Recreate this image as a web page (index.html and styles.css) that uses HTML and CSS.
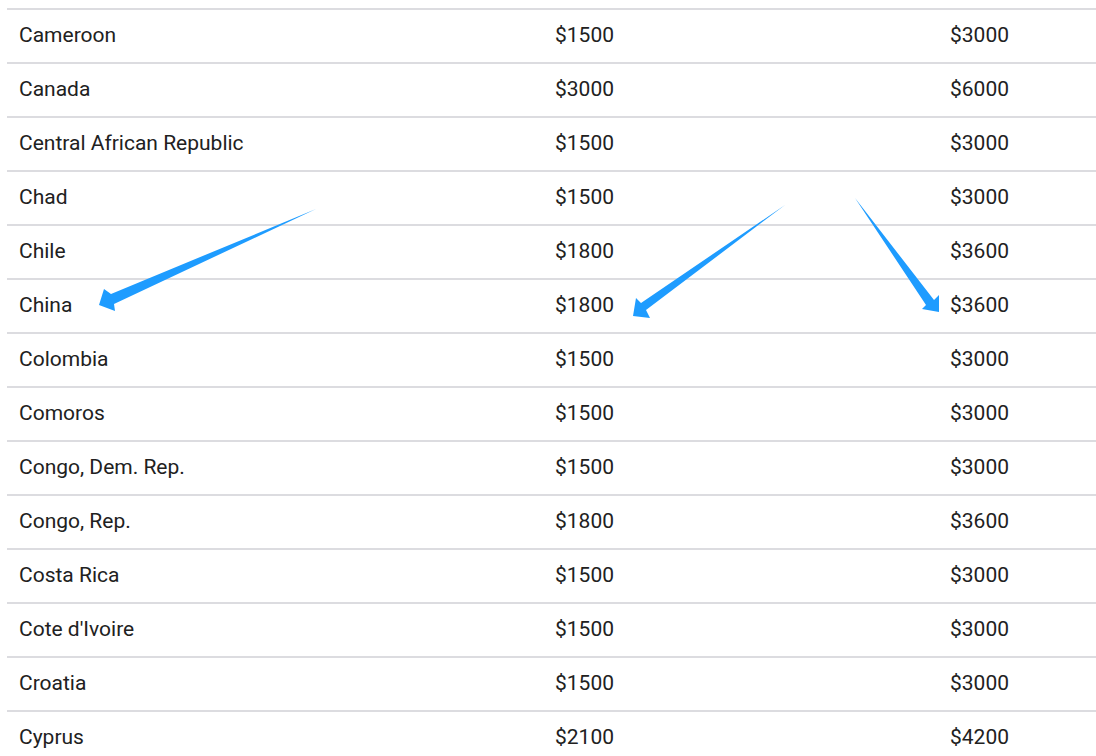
FILE: index.html
```html
<!DOCTYPE html>
<html>
<head>
<meta charset="utf-8">
<link rel="stylesheet" href="styles.css">
</head>
<body>
<div class="page">
  <div class="table">
    <div class="row"><div class="cell c1">Cameroon</div><div class="cell c2">$1500</div><div class="cell c3">$3000</div></div>
    <div class="row"><div class="cell c1">Canada</div><div class="cell c2">$3000</div><div class="cell c3">$6000</div></div>
    <div class="row"><div class="cell c1">Central African Republic</div><div class="cell c2">$1500</div><div class="cell c3">$3000</div></div>
    <div class="row"><div class="cell c1">Chad</div><div class="cell c2">$1500</div><div class="cell c3">$3000</div></div>
    <div class="row"><div class="cell c1">Chile</div><div class="cell c2">$1800</div><div class="cell c3">$3600</div></div>
    <div class="row"><div class="cell c1">China</div><div class="cell c2">$1800</div><div class="cell c3">$3600</div></div>
    <div class="row"><div class="cell c1">Colombia</div><div class="cell c2">$1500</div><div class="cell c3">$3000</div></div>
    <div class="row"><div class="cell c1">Comoros</div><div class="cell c2">$1500</div><div class="cell c3">$3000</div></div>
    <div class="row"><div class="cell c1">Congo, Dem. Rep.</div><div class="cell c2">$1500</div><div class="cell c3">$3000</div></div>
    <div class="row"><div class="cell c1">Congo, Rep.</div><div class="cell c2">$1800</div><div class="cell c3">$3600</div></div>
    <div class="row"><div class="cell c1">Costa Rica</div><div class="cell c2">$1500</div><div class="cell c3">$3000</div></div>
    <div class="row"><div class="cell c1">Cote d'Ivoire</div><div class="cell c2">$1500</div><div class="cell c3">$3000</div></div>
    <div class="row"><div class="cell c1">Croatia</div><div class="cell c2">$1500</div><div class="cell c3">$3000</div></div>
    <div class="row"><div class="cell c1">Cyprus</div><div class="cell c2">$2100</div><div class="cell c3">$4200</div></div>
  </div>
  <svg class="arrows" width="1096" height="756" viewBox="0 0 1096 756" xmlns="http://www.w3.org/2000/svg">
    <polygon fill="#1e9cff" points="316,209 111,294 104,289 99,305 115,311 114,304"/>
    <polygon fill="#1e9cff" points="785,205 641,303 636,298 633,316 650,318 646,310"/>
    <polygon fill="#1e9cff" points="855,198 926,305 922,309 939,312 939,295 934,300"/>
  </svg>
</div>
</body>
</html>
```

FILE: styles.css
```css
html, body {
  margin: 0;
  padding: 0;
  background: #ffffff;
}
.page {
  position: relative;
  width: 1096px;
  height: 756px;
  overflow: hidden;
}
.table {
  padding-top: 8px;
  padding-left: 7px;
  font-family: Roboto, "Liberation Sans", sans-serif;
  font-size: 21px;
  color: #212121;
}
.row {
  display: grid;
  grid-template-columns: 536px 395px 1fr;
  height: 52px;
  border-top: 2px solid #dcdce0;
  align-items: center;
}
.cell {
  padding-left: 12px;
  padding-bottom: 2px;
  white-space: nowrap;
}
.arrows {
  position: absolute;
  left: 0;
  top: 0;
}
```
